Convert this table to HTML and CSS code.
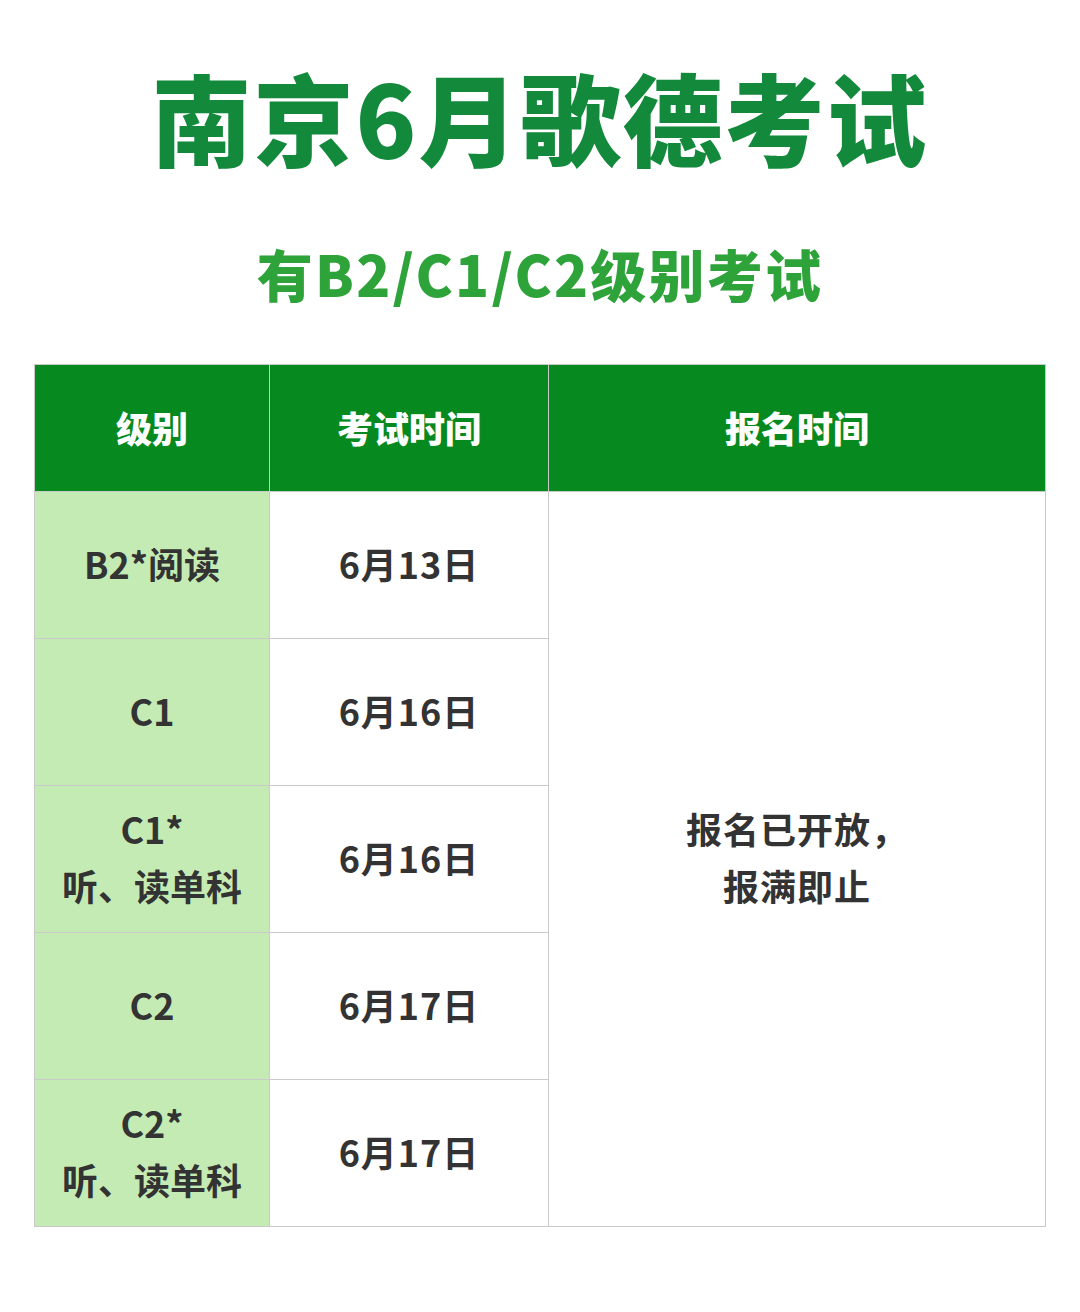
FILE: index.html
```html
<!DOCTYPE html>
<html lang="zh-CN">
<head>
<meta charset="utf-8">
<title>南京6月歌德考试</title>
<link rel="stylesheet" href="styles.css">
</head>
<body>
<div class="page">
  <h1 class="title">南京6月歌德考试</h1>
  <h2 class="subtitle">有B2/C1/C2级别考试</h2>
  <div class="table">
    <div class="th">级别</div>
    <div class="th">考试时间</div>
    <div class="th">报名时间</div>

    <div class="level">B2*阅读</div>
    <div class="date">6月13日</div>
    <div class="signup">报名已开放，<br>报满即止</div>

    <div class="level">C1</div>
    <div class="date">6月16日</div>

    <div class="level">C1*<br>听、读单科</div>
    <div class="date">6月16日</div>

    <div class="level">C2</div>
    <div class="date">6月17日</div>

    <div class="level">C2*<br>听、读单科</div>
    <div class="date">6月17日</div>
  </div>
</div>
</body>
</html>
```

FILE: styles.css
```css
html, body {
  margin: 0;
  padding: 0;
  background: #ffffff;
}

body {
  font-family: "Noto Sans CJK SC", "Noto Sans", sans-serif;
  width: 1080px;
  height: 1312px;
  overflow: hidden;
}

.page {
  display: flex;
  flex-direction: column;
  align-items: center;
}

.title {
  margin: 56px 0 0;
  font-size: 100px;
  line-height: 120px;
  font-weight: 900;
  color: #12893b;
  letter-spacing: 2px;
}

.subtitle {
  margin: 62px 0 0;
  font-size: 56px;
  line-height: 70px;
  font-weight: 900;
  color: #2ea33a;
  letter-spacing: 2.2px;
}

.table {
  margin: 56px 0 0 34px;
  align-self: flex-start;
  width: 1012px;
  display: grid;
  grid-template-columns: 234px 278px 1fr;
  grid-template-rows: 126px repeat(5, 146px);
  gap: 1px;
  background: #cacaca;
  border: 1px solid #cacaca;
  box-sizing: border-box;
}

.th {
  background: #06891f;
  color: #ffffff;
  font-size: 36px;
  font-weight: 900;
  display: flex;
  align-items: center;
  justify-content: center;
  padding-bottom: 2px;
}

.level,
.date,
.signup {
  display: flex;
  align-items: center;
  justify-content: center;
  text-align: center;
  font-size: 36px;
  font-weight: 700;
  line-height: 57px;
  color: #333333;
  padding-bottom: 4px;
}

.level {
  background: #c4ebb4;
}

.date {
  background: #ffffff;
  letter-spacing: 1px;
}

.signup {
  background: #ffffff;
  grid-column: 3;
  grid-row: 2 / span 5;
  letter-spacing: 1px;
}
```
